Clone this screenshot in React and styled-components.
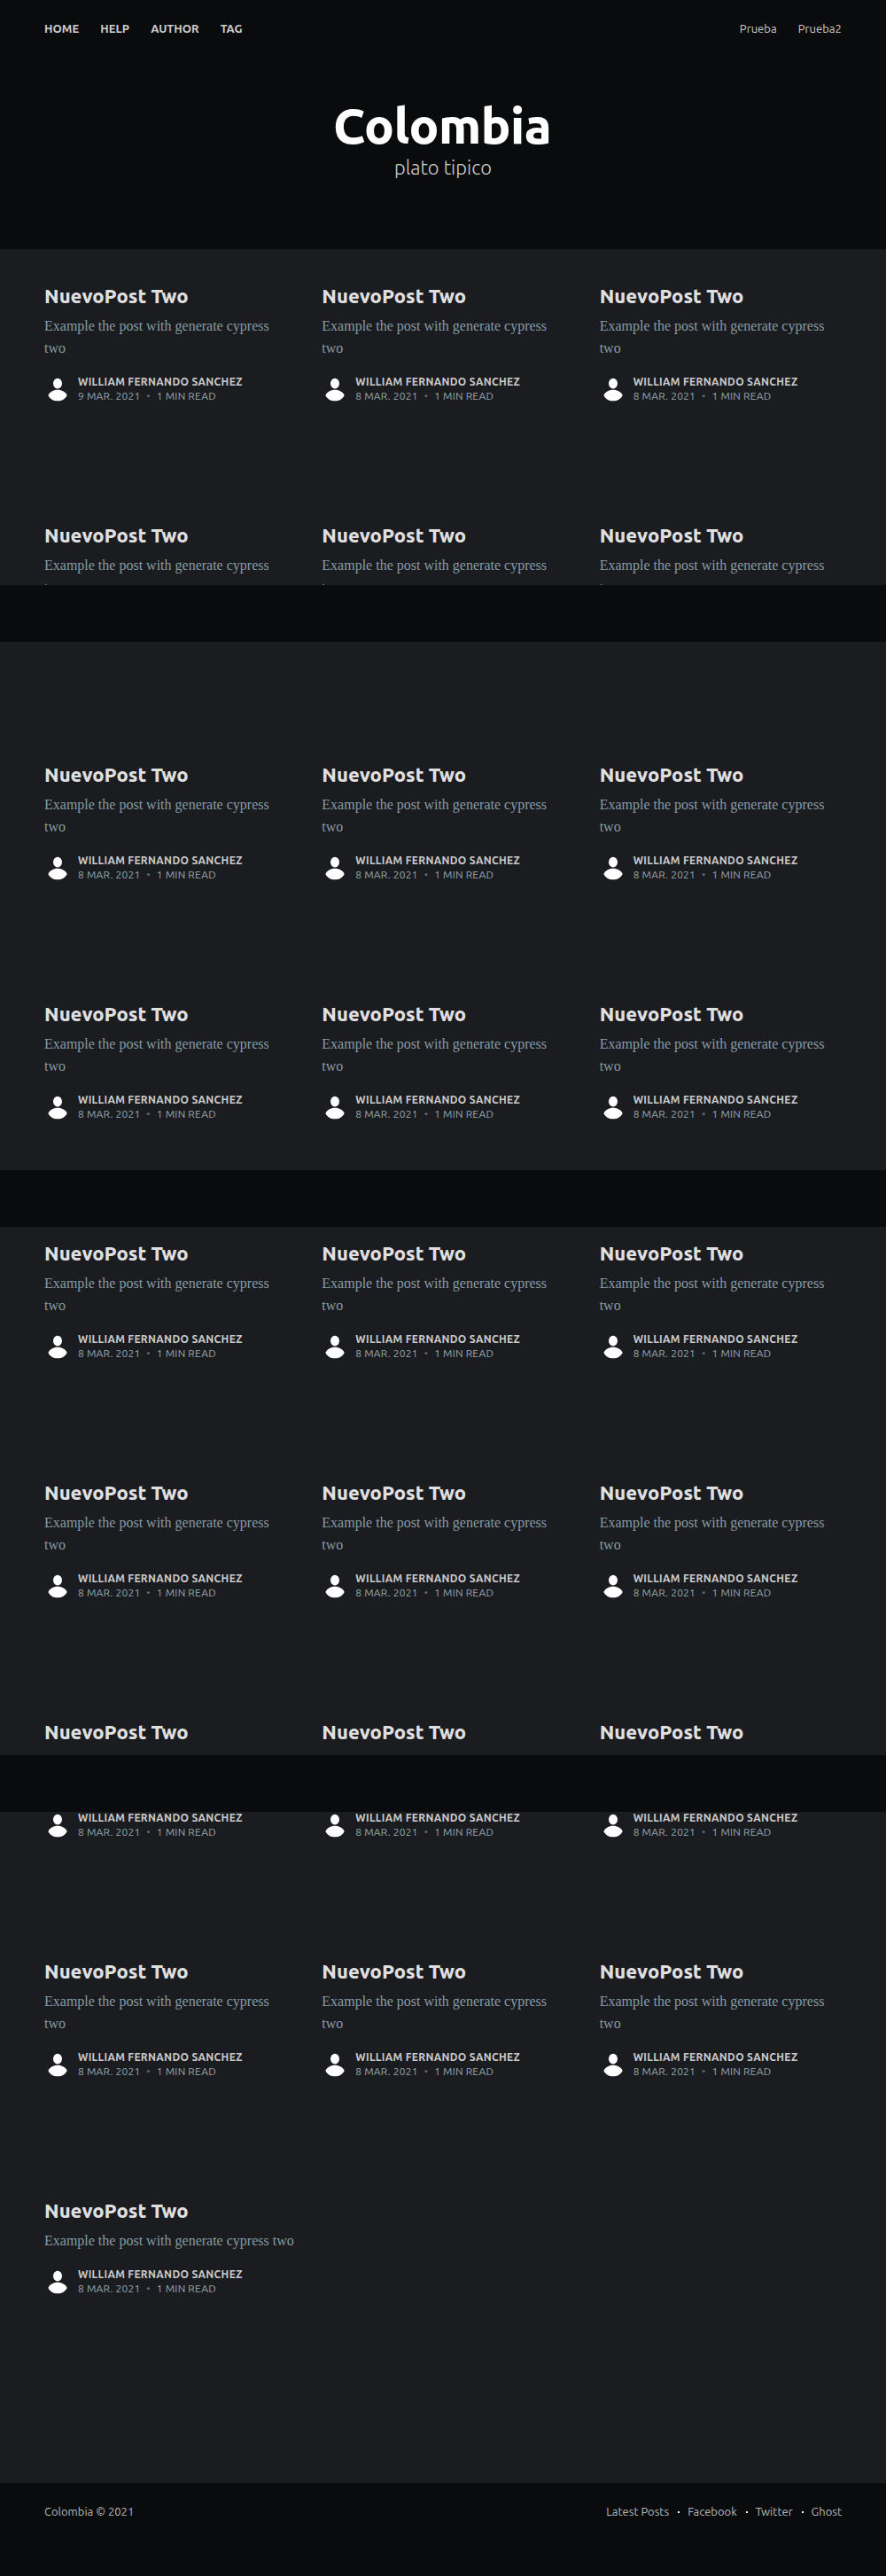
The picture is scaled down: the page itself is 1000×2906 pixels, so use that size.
import React from "react";
import styled, { createGlobalStyle } from "styled-components";

const GlobalStyle = createGlobalStyle`
  *, *::before, *::after { box-sizing: border-box; }
  body {
    margin: 0;
    background: #1b1c1f;
    font-family: Ubuntu, "Open Sans", "Noto Sans", sans-serif;
  }
  h1, h2, p, ul { margin: 0; padding: 0; }
  ul { list-style: none; }
  a { color: inherit; text-decoration: none; }
`;

const Site = styled.div`
  position: relative;
  height: 2906px;
  display: flex;
  flex-direction: column;
  overflow: hidden;
`;

const Header = styled.header`
  height: 281px;
  padding: 0 50px;
  background: #0a0b0c;
  color: #fff;
`;

const NavBar = styled.nav`
  height: 64px;
  display: flex;
  justify-content: space-between;
  align-items: center;
`;

const NavList = styled.ul`
  display: flex;
  gap: 24px;
  font-size: 13px;
  line-height: 20px;
  font-weight: ${(p) => (p.$strong ? 600 : 400)};
  letter-spacing: ${(p) => (p.$strong ? "0.08px" : "0.05px")};
  text-transform: ${(p) => (p.$strong ? "uppercase" : "none")};
  color: #cececf;
`;

const Hero = styled.div`
  display: flex;
  flex-direction: column;
  align-items: center;
  padding-top: 46px;
`;

const SiteTitle = styled.h1`
  font-size: 56px;
  line-height: 64px;
  font-weight: 800;
  letter-spacing: -0.55px;
  margin-right: 2px;
`;

const Tagline = styled.p`
  font-size: 22px;
  line-height: 30px;
  font-weight: 300;
  color: #cececf;
`;

const Main = styled.main`
  flex: 1;
  padding: 40px 50px 0;
  background: #1b1c1f;
`;

const Feed = styled.div`
  display: grid;
  grid-template-columns: repeat(3, 273.33px);
  grid-auto-rows: 270px;
  column-gap: 40px;
`;

const Card = styled.article`
  width: ${(p) => (p.$wide ? "300px" : "auto")};
`;

const CardTitle = styled.h2`
  font-size: 22px;
  line-height: 25px;
  font-weight: 800;
  color: #dfdfe0;
`;

const Excerpt = styled.p`
  margin-top: 9px;
  font-family: "Liberation Serif", serif;
  font-size: 16px;
  line-height: 25px;
  color: #869ba5;
`;

const Byline = styled.footer`
  display: flex;
  align-items: center;
  margin-top: 18px;
`;

const Avatar = styled.svg`
  width: 30px;
  height: 30px;
  margin: 0 8px 2px 0;
  flex: none;
`;

const BylineText = styled.div`
  font-size: 12px;
  line-height: 16px;
  letter-spacing: 0.2px;
  text-transform: uppercase;
  color: #93a7b0;
`;

const Author = styled.div`
  font-weight: 700;
  letter-spacing: 0.33px;
  color: #cbcbcc;
`;

const Bull = styled.span`
  display: inline-block;
  margin: 0 4px;
  opacity: 0.6;
`;

const HeaderStrip = styled.div`
  position: absolute;
  left: 0;
  right: 0;
  top: ${(p) => p.$top}px;
  height: 64px;
  background: #0a0b0c;
`;

const Footer = styled.footer`
  height: 105px;
  padding: 22px 50px 0;
  display: flex;
  justify-content: space-between;
  align-items: flex-start;
  background: #0a0b0c;
  color: #b9babb;
  font-size: 13px;
  line-height: 21px;
`;

const FooterLinks = styled.ul`
  display: flex;
`;

const FooterItem = styled.li`
  display: flex;
  align-items: center;

  &:not(:first-child)::before {
    content: "";
    width: 2px;
    height: 2px;
    margin: 0 9px 0 10px;
    background: #fff;
  }
`;

const posts = Array.from({ length: 25 }, (_, i) => ({
  id: i,
  date: i === 0 ? "9 Mar. 2021" : "8 Mar. 2021",
}));

function Post({ date, wide }) {
  return (
    <Card $wide={wide}>
      <CardTitle>NuevoPost Two</CardTitle>
      <Excerpt>Example the post with generate cypress two</Excerpt>
      <Byline>
        <Avatar viewBox="0 0 30 30" fill="#fff" aria-hidden="true">
          <ellipse cx="15" cy="9.6" rx="5" ry="5.8" />
          <path d="M4.4 22.9C6.4 19.1 10 16.8 15 16.8S23.8 19.1 25.7 22.9C23.6 27.1 20 29.3 15 29.3S6.4 27.1 4.4 22.9Z" />
        </Avatar>
        <BylineText>
          <Author>William Fernando Sanchez</Author>
          <div>
            {date} <Bull>•</Bull> 1 min read
          </div>
        </BylineText>
      </Byline>
    </Card>
  );
}

export default function App() {
  return (
    <Site>
      <GlobalStyle />
      <Header>
        <NavBar>
          <NavList $strong>
            {["Home", "Help", "Author", "Tag"].map((t) => (
              <li key={t}><a href="#">{t}</a></li>
            ))}
          </NavList>
          <NavList>
            {["Prueba", "Prueba2"].map((t) => (
              <li key={t}><a href="#">{t}</a></li>
            ))}
          </NavList>
        </NavBar>
        <Hero>
          <SiteTitle>Colombia</SiteTitle>
          <Tagline>plato tipico</Tagline>
        </Hero>
      </Header>
      <Main>
        <Feed>
          {posts.map((p) => (
            <Post key={p.id} date={p.date} wide={p.id === posts.length - 1} />
          ))}
        </Feed>
      </Main>
      {[660, 1320, 1980].map((top) => (
        <HeaderStrip key={top} $top={top} />
      ))}
      <Footer>
        <div>Colombia © 2021</div>
        <FooterLinks>
          {["Latest Posts", "Facebook", "Twitter", "Ghost"].map((t) => (
            <FooterItem key={t}><a href="#">{t}</a></FooterItem>
          ))}
        </FooterLinks>
      </Footer>
    </Site>
  );
}
